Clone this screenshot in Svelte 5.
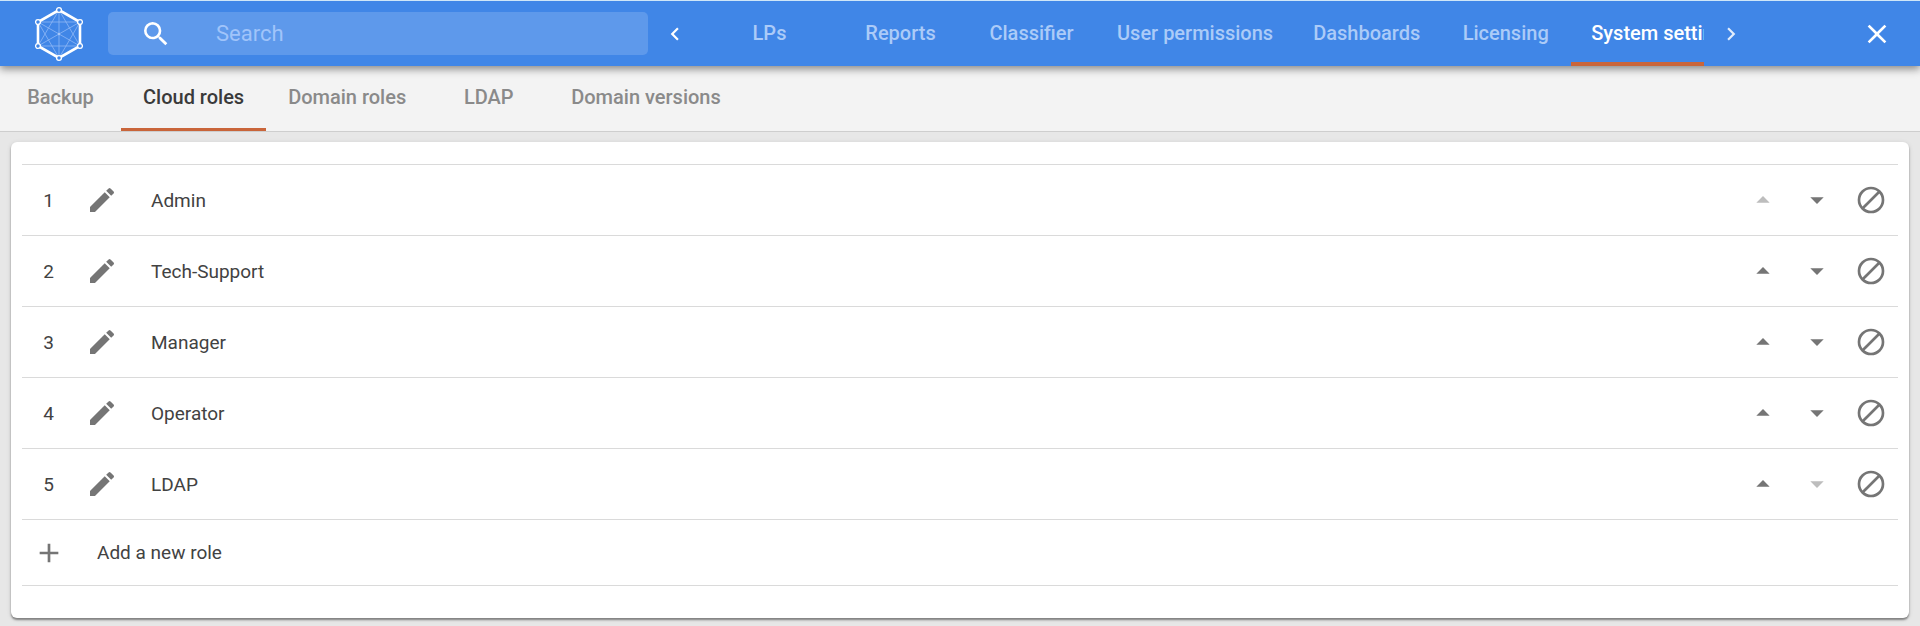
<script>
  const sections = ['LPs', 'Reports', 'Classifier', 'User permissions', 'Dashboards', 'Licensing', 'System settings'];
  const pages = ['Backup', 'Cloud roles', 'Domain roles', 'LDAP', 'Domain versions'];

  let section = $state('System settings');
  let page = $state('Cloud roles');
  let query = $state('');
  let roles = $state(['Admin', 'Tech-Support', 'Manager', 'Operator', 'LDAP']);

  function move(index, step) {
    const next = [...roles];
    [next[index], next[index + step]] = [next[index + step], next[index]];
    roles = next;
  }

  function remove(index) {
    roles = roles.filter((_, i) => i !== index);
  }

  const nodes = [[24, 4], [45, 16], [45, 40], [24, 52], [3, 40], [3, 16]];
  const chords = nodes.flatMap((a, i) => nodes.slice(i + 1).map((b) => [...a, ...b]));
</script>

<header class="topbar">
  <a class="logo" href="#home" aria-label="Home">
    <svg width="48" height="56" viewBox="0 0 48 56" fill="none">
      <g stroke="#8fb8f5" stroke-width="0.8">
        {#each chords as [x1, y1, x2, y2]}
          <line {x1} {y1} {x2} {y2} />
        {/each}
      </g>
      <circle cx="24" cy="28" r="1.2" fill="#a9c9f8" />
      <polygon points={nodes.map((n) => n.join(',')).join(' ')} stroke="#fff" stroke-width="2.6" />
      {#each nodes as [cx, cy]}
        <circle {cx} {cy} r="2.4" fill="#4086e7" stroke="#fff" stroke-width="1.3" />
      {/each}
    </svg>
  </a>
  <label class="search">
    <svg width="32" height="32" viewBox="0 0 24 24" fill="#fff" aria-hidden="true">
      <path d="M15.5 14h-.79l-.28-.27A6.47 6.47 0 0 0 16 9.5 6.5 6.5 0 1 0 9.5 16c1.61 0 3.09-.59 4.23-1.57l.27.28v.79l5 4.99L20.49 19l-4.99-5zm-6 0C7.01 14 5 11.99 5 9.5S7.01 5 9.5 5 14 7.01 14 9.5 11.99 14 9.5 14z" />
    </svg>
    <input type="search" placeholder="Search" aria-label="Search" bind:value={query} />
  </label>
  <button class="pager" aria-label="Previous sections">
    <svg width="26" height="26" viewBox="0 0 24 24" fill="#fff"><path d="M15.41 7.41 14 6l-6 6 6 6 1.41-1.41L10.83 12z" /></svg>
  </button>
  <nav class="sections">
    {#each sections as name}
      <button class="tab" class:active={name === section} onclick={() => (section = name)}>{name}</button>
    {/each}
  </nav>
  <button class="pager" aria-label="Next sections">
    <svg width="26" height="26" viewBox="0 0 24 24" fill="#e3eefc"><path d="M10 6 8.59 7.41 13.17 12l-4.58 4.59L10 18l6-6z" /></svg>
  </button>
  <button class="close" aria-label="Close">
    <svg width="32" height="32" viewBox="0 0 24 24" fill="#fff"><path d="M19 6.41 17.59 5 12 10.59 6.41 5 5 6.41 10.59 12 5 17.59 6.41 19 12 13.41 17.59 19 19 17.59 13.41 12z" /></svg>
  </button>
</header>

<nav class="pages">
  {#each pages as name}
    <button class="tab" class:active={name === page} onclick={() => (page = name)}>{name}</button>
  {/each}
</nav>

<main>
  <section class="card">
    <ol class="roles">
      {#each roles as role, i}
        <li>
          <span class="number">{i + 1}</span>
          <button class="icon" aria-label="Edit {role}">
            <svg width="32" height="32" viewBox="0 0 24 24"><path d="M3 17.25V21h3.75L17.81 9.94l-3.75-3.75L3 17.25zM20.71 7.04a1 1 0 0 0 0-1.41l-2.34-2.34a1 1 0 0 0-1.41 0l-1.83 1.83 3.75 3.75 1.83-1.83z" /></svg>
          </button>
          <span class="name">{role}</span>
          <button class="icon" aria-label="Move {role} up" disabled={i === 0} onclick={() => move(i, -1)}>
            <svg width="32" height="32" viewBox="0 0 24 24"><path d="m7 14 5-5 5 5z" /></svg>
          </button>
          <button class="icon" aria-label="Move {role} down" disabled={i === roles.length - 1} onclick={() => move(i, 1)}>
            <svg width="32" height="32" viewBox="0 0 24 24"><path d="m7 10 5 5 5-5z" /></svg>
          </button>
          <button class="icon" aria-label="Remove {role}" onclick={() => remove(i)}>
            <svg class="ban" width="32" height="32" viewBox="0 0 24 24"><circle cx="12" cy="12" r="9" /><path d="M5.6 18.4 18.4 5.6" /></svg>
          </button>
        </li>
      {/each}
    </ol>
    <button class="add">
      <span class="plus">
        <svg width="32" height="32" viewBox="0 0 24 24"><path d="M19 13h-6v6h-2v-6H5v-2h6V5h2v6h6z" /></svg>
      </span>
      <span class="name">Add a new role</span>
    </button>
  </section>
</main>

<style>
  :global(body) {
    margin: 0;
    background: #e7e7e7;
    font-family: Roboto, sans-serif;
    color: #424242;
  }

  button {
    border: 0;
    padding: 0;
    background: none;
    font: inherit;
    color: inherit;
    cursor: pointer;
  }

  svg {
    display: block;
    flex: none;
  }

  .topbar {
    position: relative;
    z-index: 1;
    display: flex;
    align-items: center;
    height: 65px;
    border-top: 1px solid #cfe6f8;
    background: #4086e7;
    box-shadow: 0 3px 8px rgba(0, 0, 0, 0.45);
  }

  .logo {
    display: flex;
    justify-content: center;
    flex: none;
    width: 108px;
    padding-left: 10px;
    box-sizing: border-box;
  }

  .search {
    display: flex;
    align-items: center;
    flex: 0 1 540px;
    gap: 44px;
    height: 43px;
    padding-left: 32px;
    padding-right: 16px;
    box-sizing: border-box;
    border-radius: 5px;
    background: #5e99eb;
  }

  .search input {
    flex: 1;
    min-width: 0;
    padding: 0;
    border: 0;
    outline: 0;
    background: none;
    font: 22px Roboto, sans-serif;
    color: #fff;
  }

  .search input::placeholder {
    color: #a0c4fa;
    opacity: 1;
  }

  .pager {
    display: flex;
    justify-content: center;
    flex: none;
    width: 54px;
  }

  .sections {
    display: flex;
    flex: 0 1 1002px;
    align-self: stretch;
    padding-left: 2px;
    box-sizing: border-box;
    overflow: hidden;
  }

  .tab {
    flex: none;
    box-sizing: border-box;
    font-size: 20px;
    font-weight: 500;
    white-space: nowrap;
    border-bottom: solid transparent;
  }

  .sections .tab {
    min-width: 131px;
    padding: 2px 20px 0;
    border-width: 4px;
    color: #abcbf8;
  }

  .sections .tab.active {
    color: #fff;
    border-color: #c9653a;
  }

  .close {
    margin-left: auto;
    margin-right: 27px;
  }

  .pages {
    display: flex;
    height: 65px;
    border-bottom: 1px solid #cecece;
    background: #f3f3f3;
  }

  .pages .tab {
    min-width: 121px;
    padding: 0 22px;
    border-width: 3px;
    color: #8a8a8a;
  }

  .pages .tab.active {
    color: #3a3a3a;
    border-color: #c9653a;
  }

  main {
    padding: 10px 11px 6px;
  }

  .card {
    padding: 22px 11px 32px;
    border-radius: 6px;
    background: #fff;
    box-shadow: 0 2px 2px rgba(0, 0, 0, 0.4), 0 1px 5px rgba(0, 0, 0, 0.12);
  }

  .roles {
    margin: 0;
    padding: 0;
    list-style: none;
    border-top: 1px solid #dadada;
  }

  .roles li,
  .add {
    display: flex;
    align-items: center;
    border-bottom: 1px solid #dadada;
    font-size: 19px;
  }

  .roles li {
    height: 70px;
  }

  .number,
  .icon,
  .plus {
    display: flex;
    justify-content: center;
    flex: none;
    width: 54px;
  }

  .number,
  .plus {
    width: 53px;
  }

  .name {
    flex: 1;
    padding-left: 22px;
    text-align: left;
  }

  .icon,
  .plus {
    fill: #757575;
  }

  .icon:disabled {
    fill: #bdbdbd;
    cursor: default;
  }

  .ban {
    fill: none;
    stroke: #757575;
    stroke-width: 2;
  }

  .add {
    width: 100%;
    height: 66px;
  }
</style>
